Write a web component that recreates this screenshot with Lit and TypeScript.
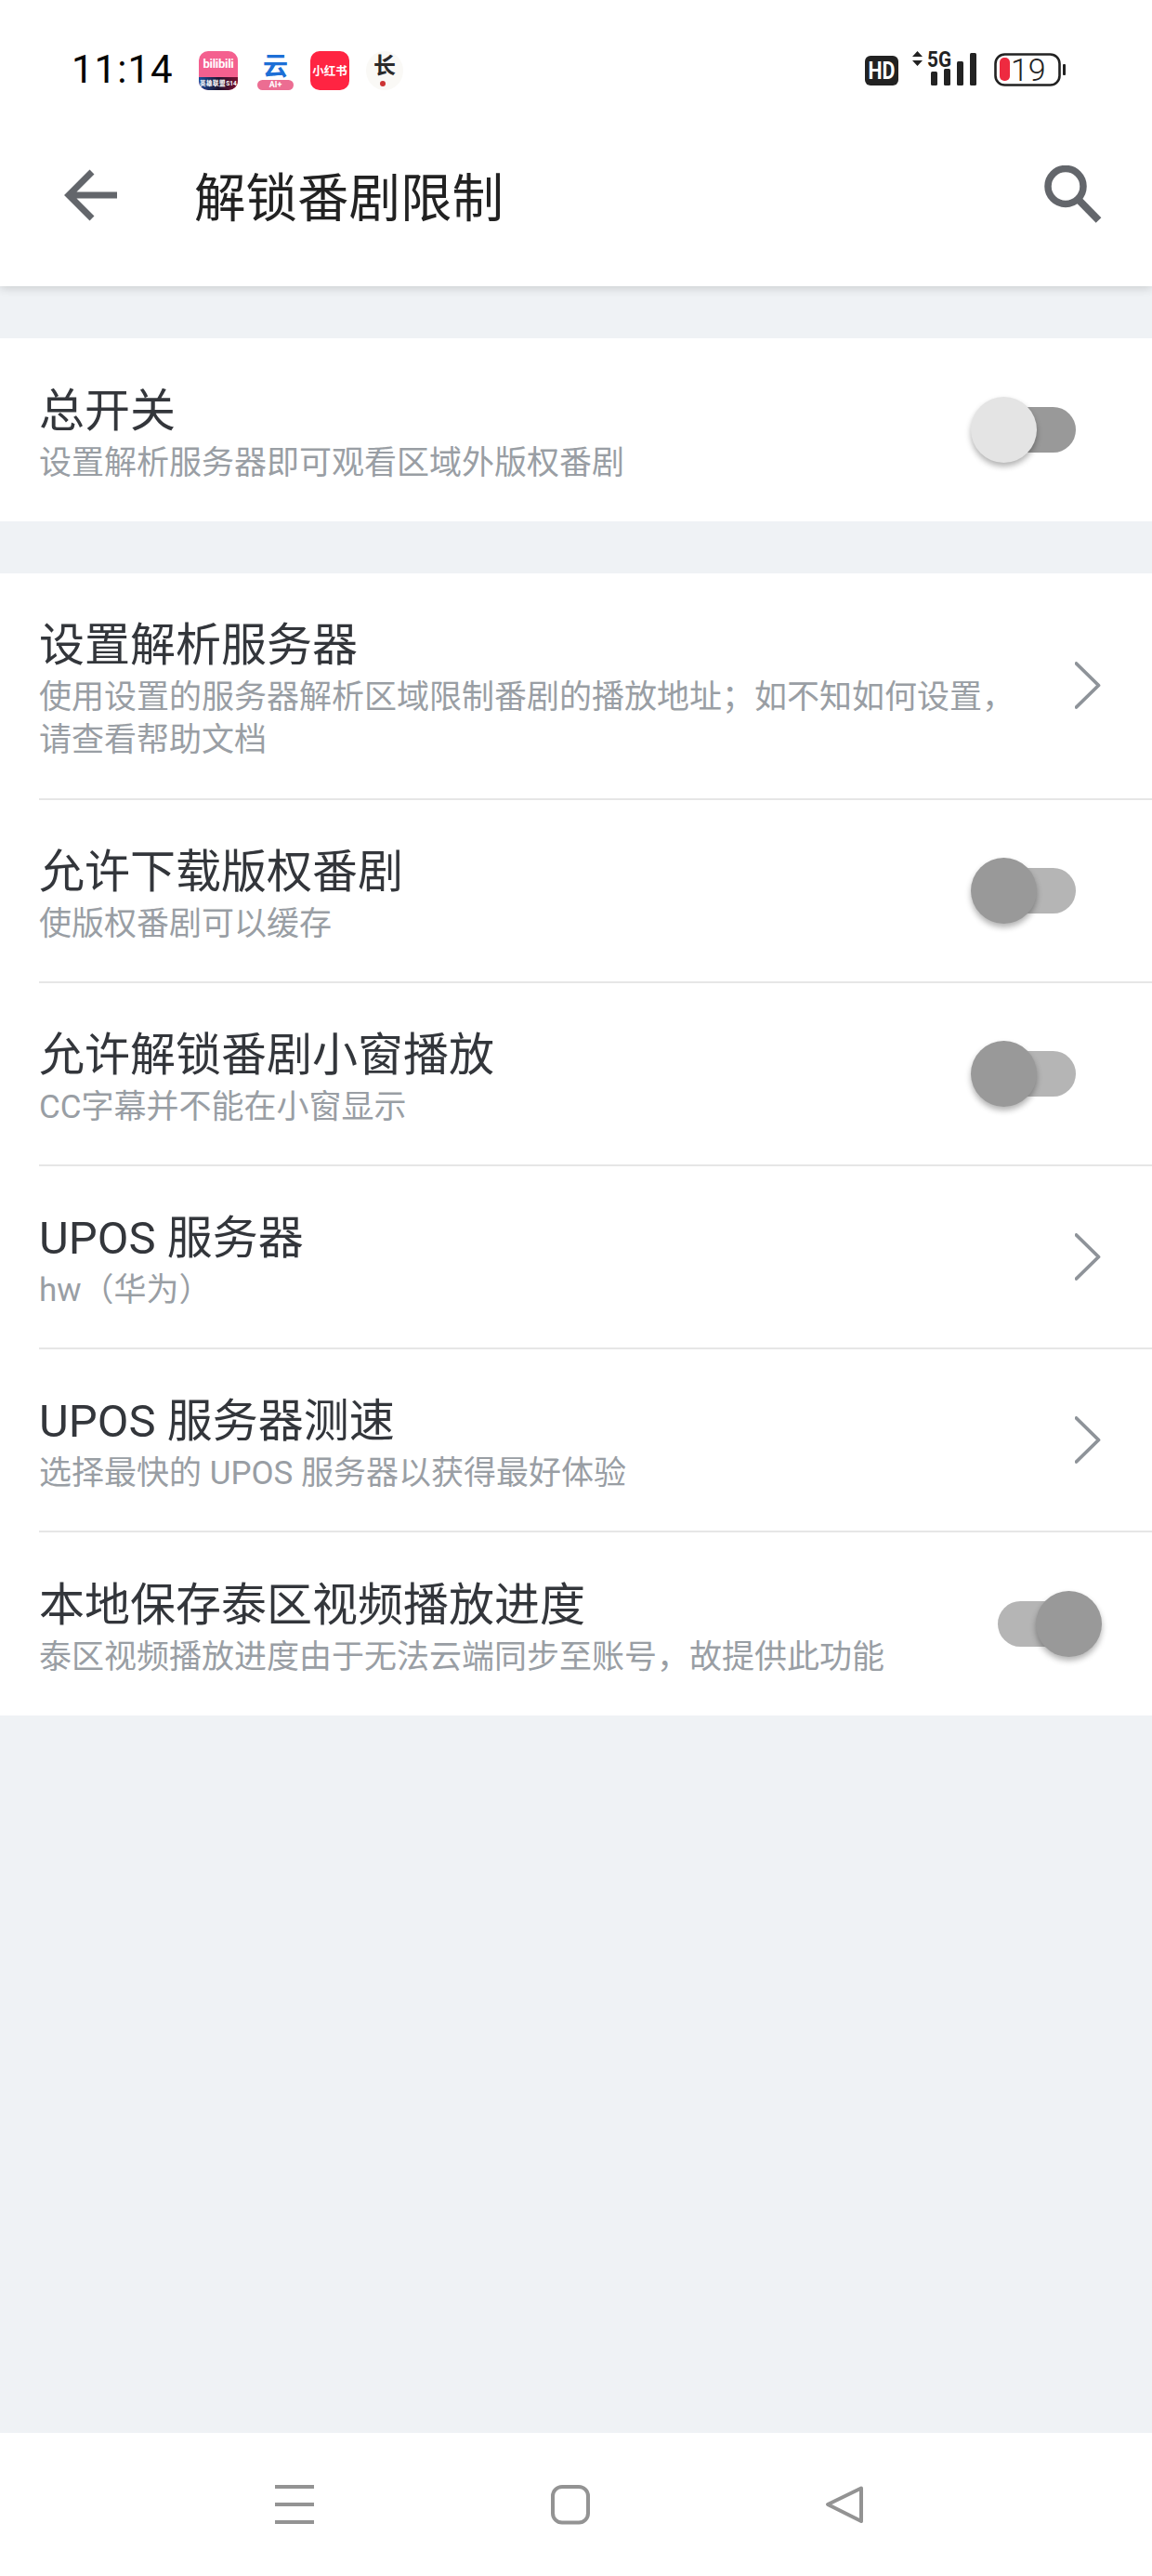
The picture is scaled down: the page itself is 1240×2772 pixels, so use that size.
import { LitElement, html, css, svg } from "lit";
import { customElement } from "lit/decorators.js";
import { classMap } from "lit/directives/class-map.js";

type Row = { title: string; sub: string; kind: "chevron" | "off" | "on" | "master"; tall?: boolean };

const masterRow: Row = { title: "总开关", sub: "设置解析服务器即可观看区域外版权番剧", kind: "master" };
const rows: Row[] = [
  { title: "设置解析服务器", sub: "使用设置的服务器解析区域限制番剧的播放地址；如不知如何设置，请查看帮助文档", kind: "chevron", tall: true },
  { title: "允许下载版权番剧", sub: "使版权番剧可以缓存", kind: "off" },
  { title: "允许解锁番剧小窗播放", sub: "CC字幕并不能在小窗显示", kind: "off" },
  { title: "UPOS 服务器", sub: "hw（华为）", kind: "chevron" },
  { title: "UPOS 服务器测速", sub: "选择最快的 UPOS 服务器以获得最好体验", kind: "chevron" },
  { title: "本地保存泰区视频播放进度", sub: "泰区视频播放进度由于无法云端同步至账号，故提供此功能", kind: "on" },
];

@customElement("app-root")
export class AppRoot extends LitElement {
  static styles = css`
    :host {
      display: flex;
      flex-direction: column;
      width: 1240px;
      height: 2772px;
      background: #eff2f5;
      font-family: "Noto Sans CJK SC", "Noto Sans", sans-serif;
      overflow: hidden;
    }
    header {
      background: #fff;
      height: 308px;
      flex: none;
      box-shadow: 0 2px 10px rgba(0, 0, 0, 0.16);
      position: relative;
      z-index: 1;
    }
    .status {
      height: 112px;
      box-sizing: border-box;
      padding: 50px 0 0 77px;
      display: flex;
      align-items: flex-start;
    }
    .time {
      font-family: Roboto, sans-serif;
      font-size: 42px;
      line-height: 50px;
      color: #050505;
      letter-spacing: 1px;
      width: 137px;
    }
    .apps {
      display: flex;
      align-items: center;
      height: 50px;
    }
    .app {
      width: 42px;
      height: 42px;
      flex: none;
      position: relative;
      text-align: center;
      margin-top: 2px;
    }
    .bili {
      background: #f4608f;
      border-radius: 10px;
      color: #fff;
      font-family: Roboto, sans-serif;
      font-weight: 700;
      font-size: 13px;
      line-height: 28px;
      display: flex;
      flex-direction: column;
      overflow: hidden;
    }
    .bili .name { flex: 1; letter-spacing: -0.3px; }
    .bili .band {
      height: 14px;
      line-height: 14px;
      font-size: 6.5px;
      white-space: nowrap;
      background: linear-gradient(90deg, #1b4f9c, #1c1430 50%, #7a1030);
    }
    .yun {
      margin-left: 21px;
      width: 39px;
      display: flex;
      flex-direction: column;
      justify-content: space-between;
    }
    .yun .glyph {
      color: #1d6fd6;
      font-size: 27px;
      line-height: 29px;
      font-weight: 700;
    }
    .yun .pill {
      background: #ec6d92;
      color: #fff;
      height: 11px;
      border-radius: 6px;
      font-family: Roboto, sans-serif;
      font-size: 9px;
      line-height: 11px;
      font-weight: 700;
    }
    .red {
      margin-left: 18px;
      background: #ff2442;
      border-radius: 10px;
      color: #fff;
      font-size: 12.5px;
      line-height: 42px;
      font-weight: 700;
      white-space: nowrap;
    }
    .chang {
      margin-left: 18px;
      width: 40px;
      border-radius: 50%;
      background: #faf9f6;
      color: #2a2a2a;
      font-size: 24px;
      line-height: 28px;
      font-weight: 700;
    }
    .chang::after {
      content: "";
      position: absolute;
      left: 15px;
      bottom: 4px;
      width: 6px;
      height: 6px;
      background: #c33;
      border-radius: 50%;
    }
    .status-right {
      margin-left: auto;
      margin-right: 89px;
      display: block;
    }
    .toolbar {
      height: 196px;
      display: flex;
      align-items: center;
      padding-left: 68px;
      padding-right: 52px;
    }
    .toolbar h1 {
      margin: -2px 0 0 81px;
      font-size: 55.5px;
      line-height: 70px;
      font-weight: 400;
      color: #222;
      flex: 1;
    }
    main {
      flex: 1;
      padding-top: 56px;
      display: flex;
      flex-direction: column;
      gap: 56px;
    }
    section { background: #fff; padding-left: 42px; }
    .row {
      height: 197px;
      box-sizing: border-box;
      display: flex;
      align-items: center;
      border-bottom: 2px solid #e6e6e6;
    }
    .row.tall { height: 244px; }
    .row:last-child { border-bottom: none; }
    .text {
      flex: 1;
      min-width: 0;
      padding-top: 10px;
      font-family: Roboto, "Noto Sans CJK SC", sans-serif;
    }
    .title {
      font-size: 49px;
      line-height: 58px;
      color: #33363b;
      font-weight: 400;
    }
    .sub {
      font-size: 35px;
      line-height: 46px;
      color: #999ea4;
      margin-top: 4px;
      max-width: 1060px;
    }
    .toggle {
      flex: none;
      width: 84px;
      height: 49px;
      border-radius: 25px;
      margin-right: 82px;
      background: #b5b5b5;
      position: relative;
    }
    .toggle.master { background: #999; }
    .thumb {
      position: absolute;
      top: -11px;
      left: -29px;
      width: 71px;
      height: 71px;
      border-radius: 50%;
      background: #999;
      box-shadow: 0 4px 6px rgba(0, 0, 0, 0.3);
    }
    .toggle.master .thumb { background: #e4e4e4; }
    .toggle.on .thumb { left: 41px; }
    .chev { flex: none; margin-right: 55px; display: block; }
    nav {
      flex: none;
      height: 154px;
      background: #fff;
      display: block;
    }
    nav svg { display: block; }
    .back, .search { display: block; flex: none; }
  `;

  private statusRight() {
    return html`<svg class="status-right" width="220" height="50" viewBox="931 50 220 50">
      <rect x="931" y="60" width="36" height="32" rx="6" fill="#222" />
      <text x="949" y="85" text-anchor="middle" font-family="Roboto, sans-serif" font-weight="700" font-size="26" fill="#fff" textLength="29" lengthAdjust="spacingAndGlyphs">HD</text>
      <path d="M987.5 55l5.5 6h-11zM987.5 71l5.5-6h-11z" fill="#222" />
      <text x="998" y="72" font-family="Roboto, sans-serif" font-weight="700" font-size="24" fill="#222" textLength="26" lengthAdjust="spacingAndGlyphs">5G</text>
      ${[[1002, 77], [1016, 74], [1030, 66], [1044, 57]].map(
        ([x, y]) => svg`<rect x=${x} y=${y} width="7" height=${92 - y} rx="1.5" fill="#222" />`
      )}
      <rect x="1071.5" y="58.5" width="69" height="33" rx="10" fill="none" stroke="#222" stroke-width="2.6" />
      <rect x="1076" y="62" width="11" height="25" rx="5" fill="#ee2a40" />
      <text x="1088" y="87" font-family="Roboto, sans-serif" font-weight="300" font-size="34" fill="#222">19</text>
      <rect x="1144" y="69" width="3" height="12" rx="1" fill="#222" />
    </svg>`;
  }

  private control(r: Row) {
    if (r.kind === "chevron") {
      return html`<svg class="chev" width="28" height="52" viewBox="0 0 28 52">
        <path d="M1.5 2L25.5 25.5L1.5 49" fill="none" stroke="#8e9399" stroke-width="3.8" stroke-linecap="round" stroke-linejoin="round" />
      </svg>`;
    }
    const cls = { toggle: true, on: r.kind === "on", master: r.kind === "master" };
    return html`<div class=${classMap(cls)}><div class="thumb"></div></div>`;
  }

  private row(r: Row) {
    return html`<div class=${classMap({ row: true, tall: !!r.tall })}>
      <div class="text">
        <div class="title">${r.title}</div>
        <div class="sub">${r.sub}</div>
      </div>
      ${this.control(r)}
    </div>`;
  }

  render() {
    return html`
      <header lang="zh-CN">
        <div class="status">
          <div class="time">11:14</div>
          <div class="apps">
            <div class="app bili"><div class="name">bilibili</div><div class="band">英雄联盟S14</div></div>
            <div class="app yun"><div class="glyph">云</div><div class="pill">AI+</div></div>
            <div class="app red">小红书</div>
            <div class="app chang">长</div>
          </div>
          ${this.statusRight()}
        </div>
        <div class="toolbar">
          <svg class="back" width="60" height="58" viewBox="0 0 60 58">
            <path d="M58 29H8M31 4L6 29l25 25" fill="none" stroke="#63666b" stroke-width="7" />
          </svg>
          <h1>解锁番剧限制</h1>
          <svg class="search" width="64" height="64" viewBox="0 0 64 64">
            <circle cx="23" cy="22.5" r="19" fill="none" stroke="#63666b" stroke-width="7.5" />
            <path d="M36 36L58.5 59" fill="none" stroke="#63666b" stroke-width="8" />
          </svg>
        </div>
      </header>
      <main lang="zh-CN">
        <section>${this.row(masterRow)}</section>
        <section>${rows.map((r) => this.row(r))}</section>
      </main>
      <nav>
        <svg width="1240" height="154" viewBox="0 2618 1240 154">
          <path d="M296 2676h42M296 2695h42M296 2714h42" stroke="#939393" stroke-width="4" fill="none" />
          <rect x="595" y="2676" width="38" height="38.5" rx="10" fill="none" stroke="#939393" stroke-width="4" />
          <path d="M927 2677.5L891 2695l36 18z" fill="none" stroke="#939393" stroke-width="4" stroke-linejoin="round" />
        </svg>
      </nav>
    `;
  }
}
